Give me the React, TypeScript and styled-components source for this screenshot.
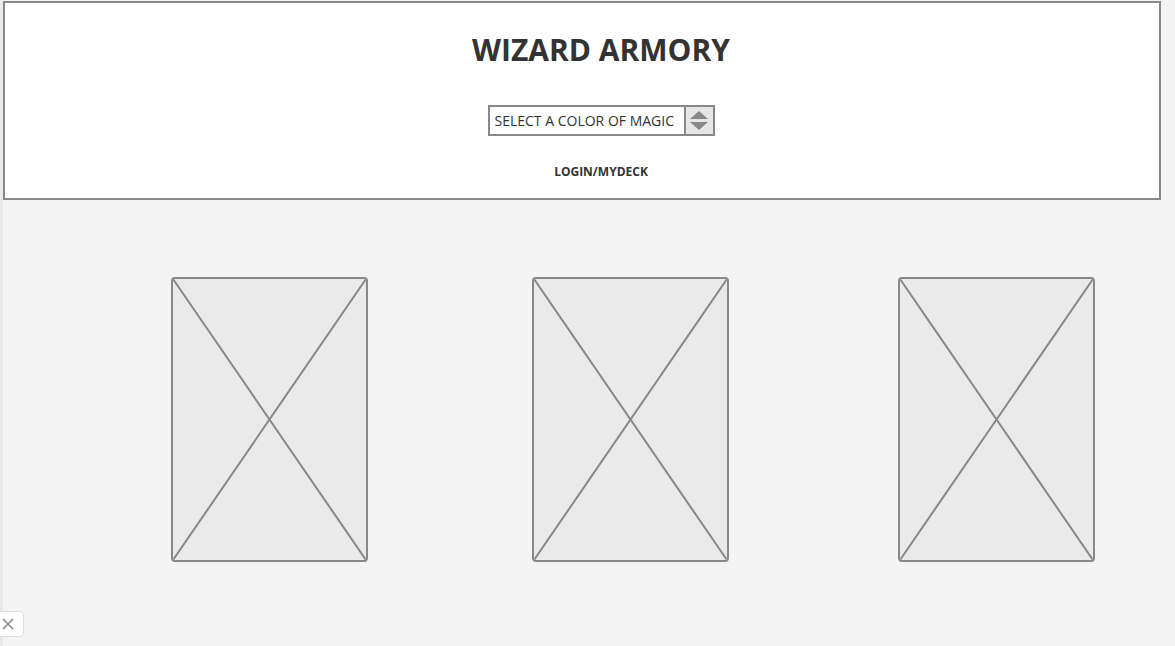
import React from "react";
import styled, { createGlobalStyle } from "styled-components";

const GlobalStyle = createGlobalStyle`
  html, body {
    margin: 0;
    padding: 0;
    background: #f4f4f4;
  }
  * { box-sizing: border-box; }
  body {
    font-family: "Open Sans", "Liberation Sans", sans-serif;
    color: #333;
  }
`;

const Page = styled.div`
  min-height: 646px;
  border-left: 3px solid #eaeaea;
  padding-top: 1px;
  padding-right: 14px;
`;

const Header = styled.header`
  height: 199px;
  border: 2px solid #888;
  background: #fff;
  padding: 29px 0 0 38px;
  display: flex;
  flex-direction: column;
  align-items: center;
`;

const Title = styled.h1`
  margin: 0;
  font-size: 30px;
  line-height: 36px;
  font-weight: 700;
  color: #333;
`;

const SelectBox = styled.div`
  margin-top: 37px;
  height: 31px;
  width: 227px;
  border: 2px solid #888;
  background: #fff;
  display: flex;
  align-items: stretch;
`;

const SelectLabel = styled.span`
  flex: 1;
  display: flex;
  align-items: center;
  padding-left: 5px;
  font-size: 14px;
  color: #333;
  white-space: nowrap;
`;

const Spinner = styled.div`
  width: 29px;
  border-left: 2px solid #888;
  background: #e6e6e6;
  display: flex;
  flex-direction: column;
  align-items: center;
  justify-content: center;
  gap: 3px;
`;

const Arrow = styled.span<{ $down?: boolean }>`
  width: 0;
  height: 0;
  border-left: 9px solid transparent;
  border-right: 9px solid transparent;
  ${(p) =>
    p.$down
      ? "border-top: 8px solid #888;"
      : "border-bottom: 8px solid #888;"}
`;

const LoginLink = styled.a`
  margin-top: 28px;
  font-size: 12px;
  line-height: 16px;
  font-weight: 700;
  color: #333;
  text-decoration: none;
`;

const CardRow = styled.main`
  display: flex;
  padding: 77px 0 0 168px;
`;

const Card = styled.div<{ $offset: number }>`
  margin-left: ${(p) => p.$offset}px;
  width: 197px;
  height: 285px;
  border: 2px solid #888;
  border-radius: 4px;
  background: #eaeaea;
  overflow: hidden;
  display: flex;
`;

const CloseButton = styled.button`
  position: fixed;
  left: -6px;
  top: 611px;
  width: 30px;
  height: 26px;
  padding: 0 3px 0 0;
  border: 1px solid #dcdcdc;
  border-radius: 4px;
  background: #fff;
  display: flex;
  align-items: center;
  justify-content: center;
  cursor: pointer;
`;

const Placeholder = () => (
  <svg width="100%" height="100%" viewBox="0 0 193 281" preserveAspectRatio="none">
    <line x1="0" y1="0" x2="193" y2="281" stroke="#888" strokeWidth="2" />
    <line x1="193" y1="0" x2="0" y2="281" stroke="#888" strokeWidth="2" />
  </svg>
);

export default function App() {
  return (
    <>
      <GlobalStyle />
      <Page>
        <Header>
          <Title>WIZARD ARMORY</Title>
          <SelectBox>
            <SelectLabel>SELECT A COLOR OF MAGIC</SelectLabel>
            <Spinner>
              <Arrow />
              <Arrow $down />
            </Spinner>
          </SelectBox>
          <LoginLink href="#">LOGIN/MYDECK</LoginLink>
        </Header>
        <CardRow>
          <Card $offset={0}><Placeholder /></Card>
          <Card $offset={164}><Placeholder /></Card>
          <Card $offset={169}><Placeholder /></Card>
        </CardRow>
      </Page>
      <CloseButton aria-label="close">
        <svg width="12" height="12" viewBox="0 0 12 12">
          <path d="M1 1L11 11M11 1L1 11" stroke="#888" strokeWidth="1.6" />
        </svg>
      </CloseButton>
    </>
  );
}
